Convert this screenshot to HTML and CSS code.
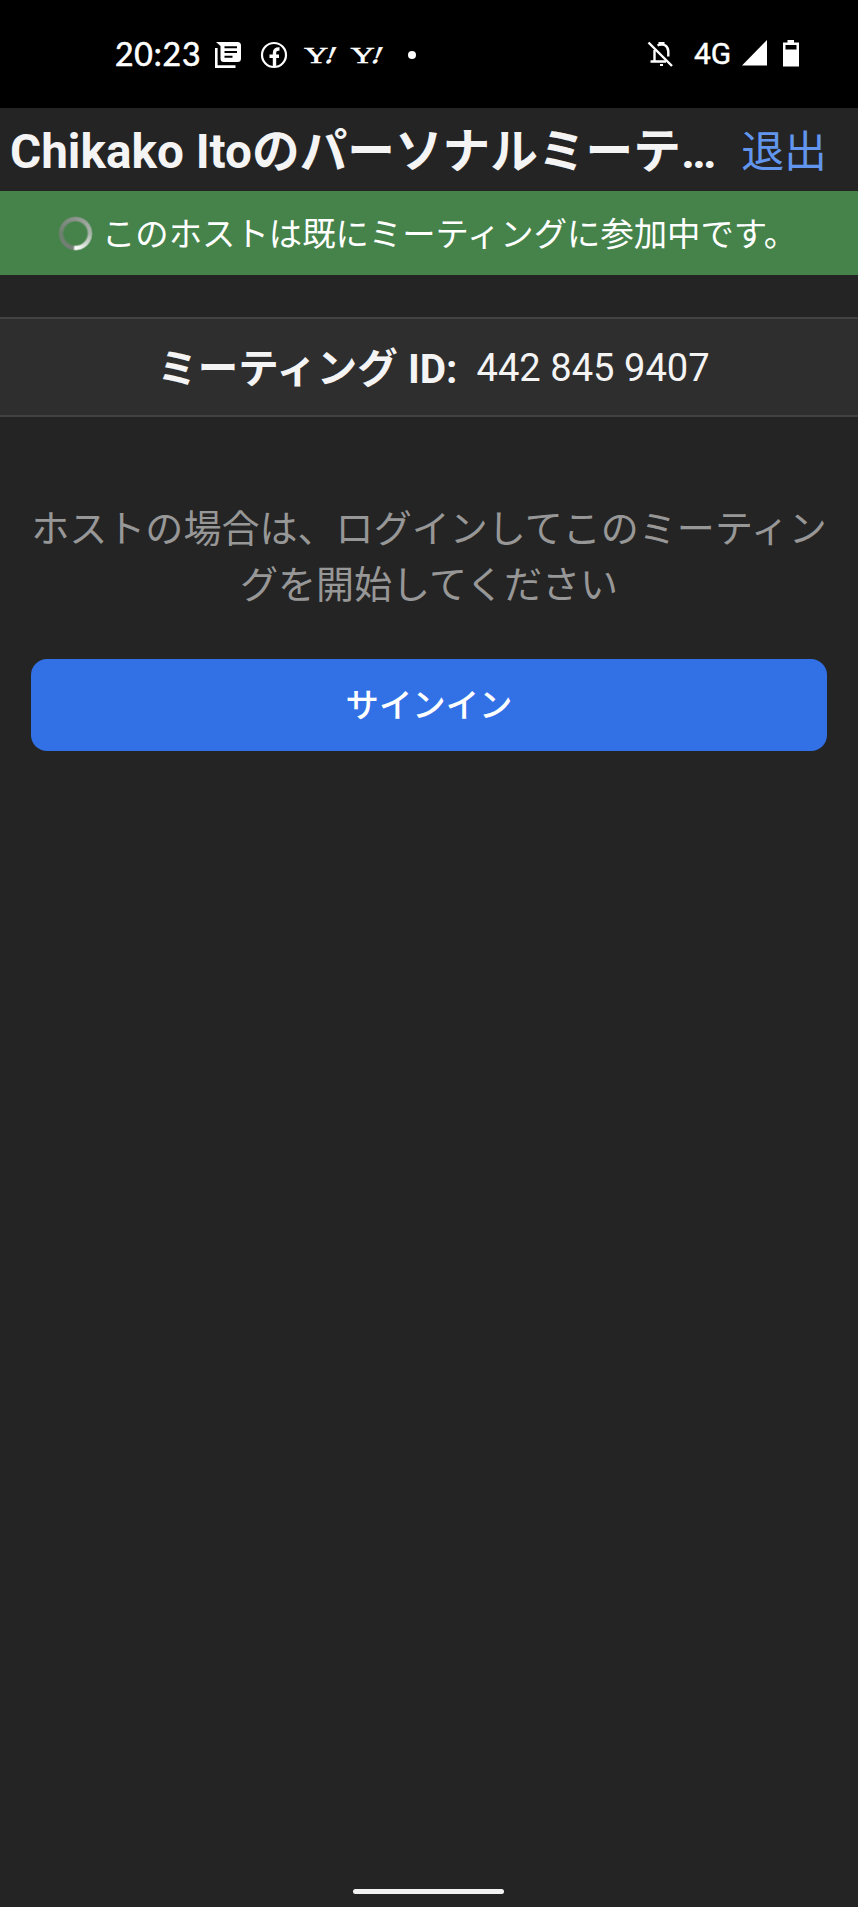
FILE: index.html
```html
<!DOCTYPE html>
<html lang="ja">
<head>
<meta charset="utf-8">
<title>ミーティング</title>
<link rel="stylesheet" href="styles.css">
</head>
<body>
<div class="screen">
  <header class="status">
    <span class="clock">20:23</span>
    <svg class="notices" width="220" height="32" viewBox="210 38 220 32" fill="#fff">
      <path d="M219 42H237.500a3.500 3.500 0 0 1 3.500 3.500V58.500a3.500 3.500 0 0 1-3.500 3.500H224a3.500 3.500 0 0 1-3.500-3.500V46L216 42Z"/>
      <path d="M216.300 48V66.600H235.500" fill="none" stroke="#fff" stroke-width="2.600"/>
      <path d="M224.500 47.300H237M224.500 52H237M224.500 56.700H232.500" stroke="#000" stroke-width="2"/>
      <circle cx="274" cy="55" r="12" fill="none" stroke="#fff" stroke-width="2.200"/>
      <path d="M274.500 66V53C274.500 50 276 48.800 279.500 49M269.500 56.300H279" fill="none" stroke="#fff" stroke-width="3.400"/>
      <g class="brand">
        <text transform="translate(304 63) scale(1.400 1)">Y</text>
        <text class="bang" transform="translate(324 63) skewX(-22)">!</text>
        <text transform="translate(350.500 63) scale(1.400 1)">Y</text>
        <text class="bang" transform="translate(370.500 63) skewX(-22)">!</text>
      </g>
      <circle cx="412" cy="55" r="4"/>
    </svg>
    <svg class="bell" width="28" height="30" viewBox="646 40 28 30" fill="none" stroke="#fff" stroke-width="2.400">
      <path d="M648.500 43.500L672 67"/>
      <path d="M654.500 51V62.500M650.500 62.500H666M657.500 46.500C663 43.500 668.300 47 668.300 52.500V57.500"/>
      <path d="M659.500 44h4v1.500h-4zM660 66h3" stroke-width="2"/>
    </svg>
    <span class="network">4G</span>
    <svg class="levels" width="58" height="30" viewBox="742 40 58 30" fill="#fff">
      <path d="M743 66.500L768 41V66.500Z"/>
      <path fill-rule="evenodd" d="M788.500 41H795V43.500H800V67.500H784V43.500H788.500ZM786.500 46V50.500H797.500V46Z"/>
    </svg>
  </header>
  <div class="titlebar">
    <h1 class="title">Chikako Itoのパーソナルミーテ…</h1>
    <a class="leave">退出</a>
  </div>
  <div class="banner">
    <span class="spinner"></span>
    <span class="message">このホストは既にミーティングに参加中です。</span>
  </div>
  <div class="meeting">
    <span class="label">ミーティング ID:</span>
    <span class="number">442 845 9407</span>
  </div>
  <p class="hint">ホストの場合は、ログインしてこのミーティン<br>グを開始してください</p>
  <button class="signin">サインイン</button>
  <div class="home"></div>
</div>
</body>
</html>
```
FILE: styles.css
```css
* { box-sizing: border-box; }
body {
  margin: 0;
  background: #242424;
  font-family: Roboto, "Noto Sans CJK JP", sans-serif;
  color: #f4f4f4;
}
.screen {
  width: 858px;
  height: 1907px;
  display: flex;
  flex-direction: column;
  white-space: nowrap;
}
.status {
  height: 108px;
  padding-left: 115px;
  display: flex;
  align-items: center;
  background: #000;
  color: #fff;
}
.clock {
  width: 95px;
  font: 32px/32px Lato, sans-serif;
  letter-spacing: 0.8px;
  -webkit-text-stroke: 0.6px #fff;
}
.notices { margin-right: 216px; }
.brand {
  font: 24px "Liberation Serif", serif;
  stroke: #fff;
  stroke-width: 0.5px;
}
.bang { font-weight: bold; }
.network {
  width: 47px;
  margin-left: 20px;
  font: 400 30px/32px Roboto, sans-serif;
  -webkit-text-stroke: 0.4px #fff;
}
.titlebar {
  height: 83px;
  padding: 6px 31px 0 10px;
  display: flex;
  align-items: center;
  justify-content: space-between;
}
.title {
  margin: 0;
  font-size: 47.67px;
  font-weight: 700;
  line-height: 77px;
}
.leave {
  font-size: 42.9px;
  line-height: 77px;
  color: #6296ee;
}
.banner {
  height: 84px;
  padding-left: 58px;
  display: flex;
  align-items: center;
  gap: 9px;
  background: #45834b;
  color: #fff;
  font-size: 33.37px;
}
.message { padding-bottom: 3px; }
.spinner {
  width: 35px;
  height: 35px;
  border-radius: 50%;
  background: conic-gradient(#8f948f, #a9b5a9 25%, #fff 50%, #777d77 53%, #6d806e 75%, #8f948f);
  mask: radial-gradient(closest-side, transparent 64%, #000 76%, #000 90%, transparent);
}
.meeting {
  height: 100px;
  margin-top: 42px;
  padding-left: 9px;
  border: solid #424242;
  border-width: 2px 0;
  background: #2e2e2e;
  display: flex;
  align-items: center;
  justify-content: center;
  gap: 19px;
}
.label { font-size: 40.5px; font-weight: 700; padding-bottom: 4px; }
.number { font-size: 38.13px; padding-top: 2px; }
.hint {
  margin: 84px 0 46px;
  display: flow-root;
  text-align: center;
  font-size: 38.05px;
  line-height: 56px;
  color: #979797;
}
.signin {
  height: 92px;
  margin: 0 31px;
  padding: 0 0 5px;
  border: 0;
  border-radius: 16px;
  background: #3270e6;
  color: #fff;
  font: 500 33.37px Roboto, "Noto Sans CJK JP", sans-serif;
}
.home {
  width: 151px;
  height: 5px;
  margin: auto auto 13px 353px;
  border-radius: 3px;
  background: #f2f2f2;
}
```
